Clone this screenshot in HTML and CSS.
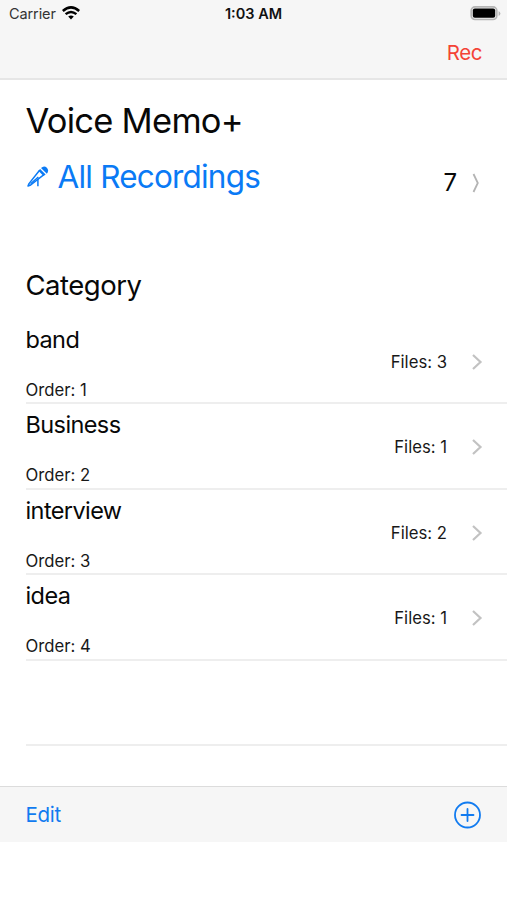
FILE: index.html
```html
<!DOCTYPE html>
<html lang="en">
<head>
<meta charset="utf-8">
<title>Voice Memo+</title>
<link rel="stylesheet" href="styles.css">
</head>
<body>
<header class="top">
  <div class="status">
    <div class="carrier"><span class="carrier-name">Carrier</span>
      <svg class="wifi" width="18" height="14" viewBox="0 0 18 14"><path d="M.8 5Q9-2.2 17.2 5" fill="none" stroke="#000" stroke-width="2.6"/><path d="M3.6 8.2Q9 3.6 14.4 8.2" fill="none" stroke="#000" stroke-width="2.4"/><path d="M9 13.6L6.2 10.6Q9 8.5 11.8 10.6Z"/></svg>
    </div>
    <span class="time">1:03 AM</span>
    <svg class="battery" width="31" height="15" viewBox="0 0 31 15"><rect x="1.2" y=".9" width="25.6" height="12.6" rx="3.8" fill="#f0f0f0" stroke="#b5b5b5" stroke-width="1.7"/><rect x="2.8" y="2.6" width="22.4" height="9.2" rx="2"/><path d="M28.6 5v5q1.8-1 1.8-2.5T28.6 5z" fill="#b5b5b5"/></svg>
  </div>
  <div class="nav"><span class="rec">Rec</span></div>
</header>
<main>
  <h1>Voice Memo+</h1>
  <div class="all">
    <svg class="mic" width="24" height="24" viewBox="0 0 24 24"><g fill="none" stroke="#0a7af5" stroke-width="1.5" stroke-linejoin="round"><path d="M13.2 5.7L3 18.6L2 21.1L4.7 20L17.6 9.9"/><path d="M4.6 18.8L12.4 12M11.9 14v7.2"/></g><path d="M12.3 5.7L14.1 3.9L19.6 9.4L17.6 11Z" fill="#0a7af5"/><path d="M15 3Q18-.1 20.9 2.8Q23.4 5.6 20.8 8.8Z" fill="#0a7af5"/></svg>
    <span class="all-label">All Recordings</span>
    <span class="count">7</span>
    <svg class="thin" width="9" height="20" viewBox="0 0 9 20"><path d="M2.5 1L6.8 10L2.5 19" fill="none" stroke="#b4b4b4" stroke-width="1.8"/></svg>
  </div>
  <h2>Category</h2>
  <ul>
    <li><div class="info"><span class="name">band</span><span class="order">Order: 1</span></div><span class="files">Files: 3</span><svg class="chev" width="12" height="18" viewBox="0 0 12 18"><path d="M2 2L9.5 9L2 16"/></svg></li>
    <li><div class="info"><span class="name">Business</span><span class="order">Order: 2</span></div><span class="files">Files: 1</span><svg class="chev" width="12" height="18" viewBox="0 0 12 18"><path d="M2 2L9.5 9L2 16"/></svg></li>
    <li><div class="info"><span class="name">interview</span><span class="order">Order: 3</span></div><span class="files">Files: 2</span><svg class="chev" width="12" height="18" viewBox="0 0 12 18"><path d="M2 2L9.5 9L2 16"/></svg></li>
    <li><div class="info"><span class="name">idea</span><span class="order">Order: 4</span></div><span class="files">Files: 1</span><svg class="chev" width="12" height="18" viewBox="0 0 12 18"><path d="M2 2L9.5 9L2 16"/></svg></li>
    <li></li>
  </ul>
</main>
<footer>
  <span class="edit">Edit</span>
  <svg width="28" height="28" viewBox="0 0 28 28"><g fill="none" stroke="#117bf0" stroke-width="1.8"><circle cx="13.5" cy="14" r="12.5"/><path d="M13.5 8v12M7.5 14h12" stroke-linecap="round"/></g></svg>
</footer>
</body>
</html>
```
FILE: styles.css
```css
* { box-sizing: border-box; }
body {
  margin: 0;
  height: 900px;
  overflow: hidden;
  background: #fff;
  color: #080808;
  font-family: Inter, "Liberation Sans", sans-serif;
}
svg { display: block; flex: none; }
.top {
  height: 80px;
  background: #f6f6f6;
  border-bottom: 2px solid #e6e6e6;
}
.status {
  display: grid;
  grid-template-columns: 1fr auto 1fr;
  align-items: center;
  height: 26px;
  padding: 1px 6px 0 9px;
  line-height: 26px;
}
.carrier { display: flex; align-items: center; gap: 6px; }
.wifi { margin-top: -2px; }
.carrier-name { font-size: 14.5px; color: #333; letter-spacing: -0.1px; }
.time { margin-right: 3px; font-size: 14.5px; font-weight: 600; color: #111; }
.battery { justify-self: end; margin-top: -1px; }
.nav { display: flex; justify-content: flex-end; padding-right: 25px; }
.rec { font-size: 20.5px; line-height: 54px; letter-spacing: -0.4px; color: #f44336; }
main { height: 706px; padding-left: 25.5px; }
h1, h2 { margin: 0; font-weight: 400; }
h1 { padding-top: 20px; font-size: 34.5px; line-height: 42px; letter-spacing: -0.75px; }
.all { display: flex; align-items: center; height: 50px; margin-top: 10px; padding-right: 27px; }
.mic { margin-top: -1px; }
.all-label { margin-left: 8px; font-size: 31.5px; line-height: 50px; letter-spacing: -0.8px; color: #0a7af5; }
.count { margin: 11px 14px 0 auto; font-size: 24px; line-height: 30px; }
.thin { margin-top: 11px; }
h2 { margin-top: 65.5px; font-size: 27.5px; line-height: 34px; letter-spacing: -0.5px; }
ul { list-style: none; margin: 17px 0 0; padding: 0; }
li { display: flex; align-items: flex-start; height: 85.5px; border-bottom: 2px solid #eee; padding-right: 24px; }
.info { display: flex; flex-direction: column; flex: 1; }
.name { margin-top: 6.2px; font-size: 23.5px; line-height: 30px; letter-spacing: -0.6px; }
.order { margin-top: 24.2px; font-size: 16.7px; line-height: 22px; color: #181818; }
.files { margin-top: 32.2px; font-size: 16.7px; line-height: 22px; color: #181818; }
.chev { margin: 34.2px 0 0 24px; }
.chev path { fill: none; stroke: #c2c2c2; stroke-width: 2.2; }
footer {
  display: flex;
  align-items: center;
  justify-content: space-between;
  height: 56px;
  padding: 1px 25px 0 25.5px;
  background: #f6f6f6;
  border-top: 1px solid #dcdcdc;
}
.edit { font-size: 20.5px; line-height: 30px; letter-spacing: -0.3px; color: #117bf0; }
```
